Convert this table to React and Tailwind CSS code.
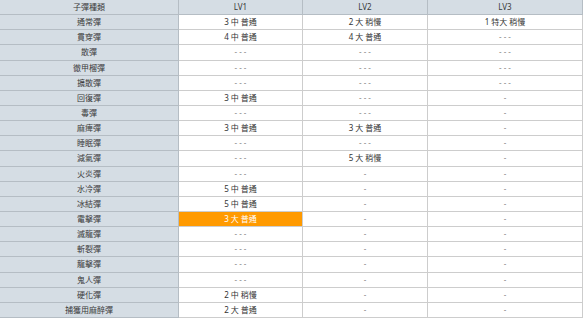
import { clsx } from 'clsx'

// ── Data ──────────────────────────────────────────────────────
const rows = [
  ['通常彈', '3 中 普通', '2 大 稍慢', '1 特大 稍慢'],
  ['貫穿彈', '4 中 普通', '4 大 普通', '- - -'],
  ['散彈', '- - -', '- - -', '- - -'],
  ['徹甲榴彈', '- - -', '- - -', '- - -'],
  ['擴散彈', '- - -', '- - -', '- - -'],
  ['回復彈', '3 中 普通', '- - -', '-'],
  ['毒彈', '- - -', '- - -', '-'],
  ['麻痺彈', '3 中 普通', '3 大 普通', '-'],
  ['睡眠彈', '- - -', '- - -', '-'],
  ['減氣彈', '- - -', '5 大 稍慢', '-'],
  ['火炎彈', '- - -', '-', '-'],
  ['水冷彈', '5 中 普通', '-', '-'],
  ['冰結彈', '5 中 普通', '-', '-'],
  ['電擊彈', '3 大 普通', '-', '-', true],
  ['滅龍彈', '- - -', '-', '-'],
  ['斬裂彈', '- - -', '-', '-'],
  ['龍擊彈', '- - -', '-', '-'],
  ['鬼人彈', '- - -', '-', '-'],
  ['硬化彈', '2 中 稍慢', '-', '-'],
  ['捕獲用麻醉彈', '2 大 普通', '-', '-'],
]

const font = { fontFamily: '"Noto Sans", "Noto Sans CJK TC", sans-serif' }

function Cell({ children, head, side, hot }) {
  const dash = typeof children === 'string' && children.startsWith('-')
  const tone = head || side
    ? 'bg-[#d5dde4] border-[#b5bdc4] text-[#3a3a3a]'
    : hot
      ? 'bg-[#ff9a00] border-[#cdcdcd] text-white'
      : clsx('bg-white border-[#cdcdcd]', dash ? 'text-[#8a8a8a]' : 'text-[#333]')
  return (
    <div className={clsx('flex items-center justify-center text-[8px] leading-none border-b border-r', tone)}>
      {children}
    </div>
  )
}

export default function App() {
  return (
    <div className="w-[584px] h-[318px] bg-white overflow-hidden" style={font}>
      <div className="w-[583px] h-[318px] grid grid-cols-[179px_124px_125px_1fr] grid-rows-[repeat(21,minmax(0,1fr))]">
        <Cell head>子彈種類</Cell>
        <Cell head>LV1</Cell>
        <Cell head>LV2</Cell>
        <Cell head>LV3</Cell>
        {rows.map(([name, a, b, c, hot]) => (
          <div key={name} className="contents">
            <Cell side>{name}</Cell>
            <Cell hot={hot}>{a}</Cell>
            <Cell>{b}</Cell>
            <Cell>{c}</Cell>
          </div>
        ))}
      </div>
    </div>
  )
}
